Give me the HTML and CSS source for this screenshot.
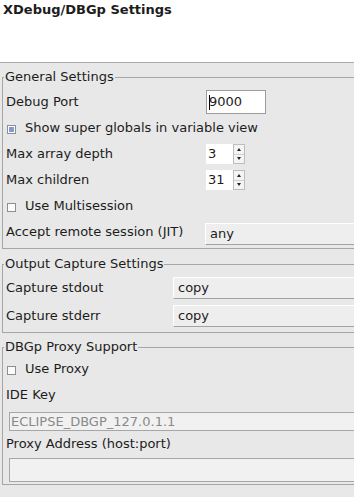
FILE: index.html
```html
<!DOCTYPE html>
<html>

<head>
    <title>XDebug/DBGp Settings</title>
    <meta charset="utf-8">
    <link rel="stylesheet" href="styles.css">
</head>

<body>
    <div id="page">
        <div class="titlebar">XDebug/DBGp Settings</div>

        <fieldset class="group general">
            <legend>General Settings</legend>
            <div class="row">
                <span class="label">Debug Port</span>
                <span class="port"><span class="caret"></span>9000</span>
            </div>
            <div class="row">
                <span class="check on"></span>Show super globals in variable view
            </div>
            <div class="row">
                <span class="label">Max array depth</span>
                <span class="spin">
                    <span class="spin-value">3</span>
                    <span class="spin-buttons"><span class="spin-up"></span><span class="spin-down"></span></span>
                </span>
            </div>
            <div class="row">
                <span class="label">Max children</span>
                <span class="spin">
                    <span class="spin-value">31</span>
                    <span class="spin-buttons"><span class="spin-up"></span><span class="spin-down"></span></span>
                </span>
            </div>
            <div class="row">
                <span class="check"></span>Use Multisession
            </div>
            <div class="row jit">
                <span class="label">Accept remote session (JIT)</span>
                <span class="combo">any</span>
            </div>
        </fieldset>

        <fieldset class="group capture">
            <legend>Output Capture Settings</legend>
            <div class="row">
                <span class="label">Capture stdout</span>
                <span class="combo">copy</span>
            </div>
            <div class="row">
                <span class="label">Capture stderr</span>
                <span class="combo">copy</span>
            </div>
        </fieldset>

        <fieldset class="group proxy">
            <legend>DBGp Proxy Support</legend>
            <div class="row">
                <span class="check"></span>Use Proxy
            </div>
            <div class="row">IDE Key</div>
            <div class="field idekey">ECLIPSE_DBGP_127.0.1.1</div>
            <div class="caption">Proxy Address (host:port)</div>
            <div class="field address"></div>
        </fieldset>
    </div>
</body>

</html>
```

FILE: styles.css
```css
body {
    margin: 0;
    overflow: hidden;
    background: #e8e8e8;
    font-family: "DejaVu Sans", sans-serif;
    font-size: 13px;
    line-height: 16px;
    color: #1c1c1c;
}

#page {
    width: 420px;
}

.titlebar {
    height: 58px;
    padding: 2px 3px;
    background: #fff;
    border-bottom: 1px solid #ababab;
    font-weight: bold;
}

fieldset.group {
    margin: 6px 0 0 2px;
    padding: 3px 0 3px 3px;
    border: 1px solid #a6a6a6;
    min-width: 0;
}

fieldset.group legend {
    padding: 0 1px;
    margin-left: -2px;
}

fieldset.general {
    padding-top: 4px;
    padding-bottom: 3px;
}

fieldset.capture {
    margin-top: 7px;
}

fieldset.proxy {
    padding-top: 1px;
    padding-bottom: 2px;
}

.row {
    display: flex;
    align-items: center;
    height: 26px;
}

.label {
    width: 200px;
    flex: none;
}

.capture .label {
    width: 167px;
}

.capture .row + .row {
    margin-top: 2px;
}

/* text entry with caret */
.port {
    display: flex;
    align-items: center;
    width: 60px;
    height: 24px;
    box-sizing: border-box;
    padding-left: 2px;
    border: 1px solid #9c9c9c;
    background: #fff;
}

.caret {
    height: 15px;
    border-left: 1px solid #000;
    margin-right: -1px;
}

/* spin box */
.spin {
    display: flex;
    height: 20px;
}

.spin-value {
    width: 27px;
    box-sizing: border-box;
    padding-left: 2px;
    background: #fff;
    line-height: 20px;
}

.spin-buttons {
    display: flex;
    flex-direction: column;
    width: 12px;
    box-sizing: border-box;
    border: 1px solid #bdbdbd;
    background: #f4f4f4;
}

.spin-buttons span {
    flex: 1;
    display: flex;
    align-items: center;
    justify-content: center;
}

.spin-up {
    border-bottom: 1px solid #cfcfcf;
}

.spin-up::after,
.spin-down::after {
    content: "";
    border-left: 2px solid transparent;
    border-right: 2px solid transparent;
}

.spin-up::after {
    border-bottom: 3px solid #222;
}

.spin-down::after {
    border-top: 3px solid #222;
}

/* check boxes */
.check {
    flex: none;
    width: 9px;
    height: 9px;
    box-sizing: border-box;
    margin: 3px 9px 0 1px;
    border: 1px solid #8e8e8e;
    background: #fbfbfb;
}

.check.on {
    background: #7f9dd4;
    box-shadow: inset 0 0 0 1px #fff;
}

/* combo boxes */
.combo {
    flex: 1;
    height: 22px;
    box-sizing: border-box;
    padding-left: 4px;
    border-top: 1px solid #fff;
    border-left: 1px solid #fff;
    border-bottom: 1px solid #a3a3a3;
    background: #eeeeee;
    line-height: 20px;
}

.jit .combo {
    align-self: flex-end;
    margin-left: -1px;
}

/* proxy fields */
.field {
    margin-left: 3px;
    box-sizing: border-box;
    border: 1px solid #a6a6a6;
    background: #f1f1f1;
}

.idekey {
    height: 19px;
    margin-top: 4px;
    padding-left: 1px;
    color: #8a8a8a;
    line-height: 17px;
}

.caption {
    margin-top: 5px;
}

.address {
    height: 24px;
    margin-top: 6px;
}
```
